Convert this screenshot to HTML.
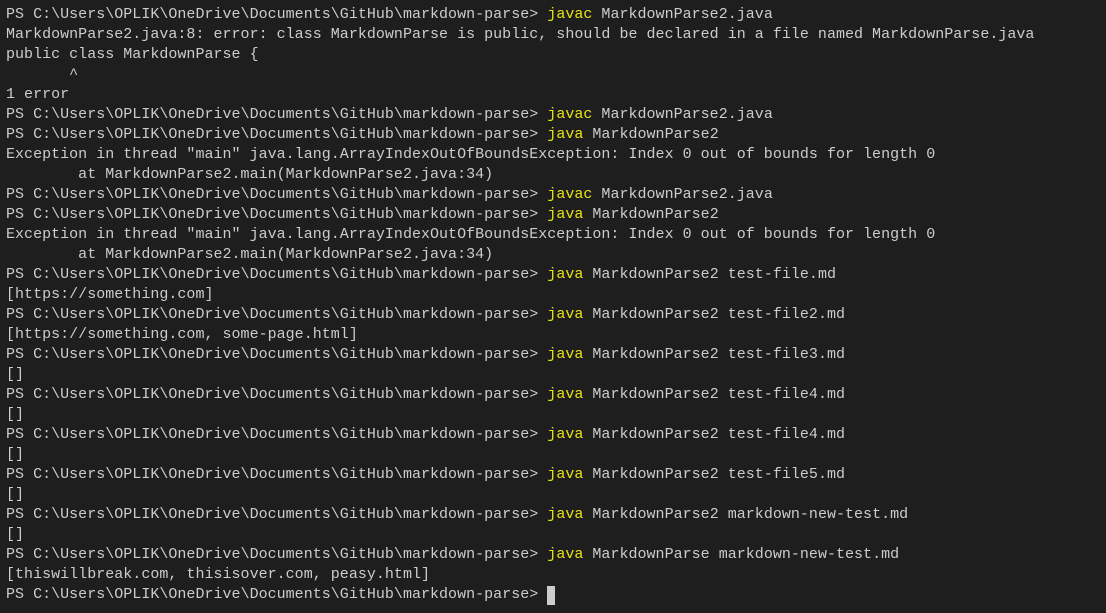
<!DOCTYPE html>
<html><head><style>
html,body{margin:0;padding:0;background:#1e1e1e;width:1106px;height:613px;overflow:hidden}
pre{margin:0;position:absolute;left:6px;top:5px;font-family:"Liberation Mono",monospace;font-size:15px;line-height:20px;color:#cccccc;letter-spacing:0.02px}
.y{color:#e5e510}
.c{display:inline-block;width:8px;height:19px;background:#cccccc;vertical-align:top;margin-top:1px}
</style></head><body><pre>PS C:\Users\OPLIK\OneDrive\Documents\GitHub\markdown-parse&gt; <span class="y">javac</span> MarkdownParse2.java
MarkdownParse2.java:8: error: class MarkdownParse is public, should be declared in a file named MarkdownParse.java
public class MarkdownParse {
       ^
1 error
PS C:\Users\OPLIK\OneDrive\Documents\GitHub\markdown-parse&gt; <span class="y">javac</span> MarkdownParse2.java
PS C:\Users\OPLIK\OneDrive\Documents\GitHub\markdown-parse&gt; <span class="y">java</span> MarkdownParse2
Exception in thread "main" java.lang.ArrayIndexOutOfBoundsException: Index 0 out of bounds for length 0
        at MarkdownParse2.main(MarkdownParse2.java:34)
PS C:\Users\OPLIK\OneDrive\Documents\GitHub\markdown-parse&gt; <span class="y">javac</span> MarkdownParse2.java
PS C:\Users\OPLIK\OneDrive\Documents\GitHub\markdown-parse&gt; <span class="y">java</span> MarkdownParse2
Exception in thread "main" java.lang.ArrayIndexOutOfBoundsException: Index 0 out of bounds for length 0
        at MarkdownParse2.main(MarkdownParse2.java:34)
PS C:\Users\OPLIK\OneDrive\Documents\GitHub\markdown-parse&gt; <span class="y">java</span> MarkdownParse2 test-file.md
[https://something.com]
PS C:\Users\OPLIK\OneDrive\Documents\GitHub\markdown-parse&gt; <span class="y">java</span> MarkdownParse2 test-file2.md
[https://something.com, some-page.html]
PS C:\Users\OPLIK\OneDrive\Documents\GitHub\markdown-parse&gt; <span class="y">java</span> MarkdownParse2 test-file3.md
[]
PS C:\Users\OPLIK\OneDrive\Documents\GitHub\markdown-parse&gt; <span class="y">java</span> MarkdownParse2 test-file4.md
[]
PS C:\Users\OPLIK\OneDrive\Documents\GitHub\markdown-parse&gt; <span class="y">java</span> MarkdownParse2 test-file4.md
[]
PS C:\Users\OPLIK\OneDrive\Documents\GitHub\markdown-parse&gt; <span class="y">java</span> MarkdownParse2 test-file5.md
[]
PS C:\Users\OPLIK\OneDrive\Documents\GitHub\markdown-parse&gt; <span class="y">java</span> MarkdownParse2 markdown-new-test.md
[]
PS C:\Users\OPLIK\OneDrive\Documents\GitHub\markdown-parse&gt; <span class="y">java</span> MarkdownParse markdown-new-test.md
[thiswillbreak.com, thisisover.com, peasy.html]
PS C:\Users\OPLIK\OneDrive\Documents\GitHub\markdown-parse&gt; <span class="c"></span></pre></body></html>
